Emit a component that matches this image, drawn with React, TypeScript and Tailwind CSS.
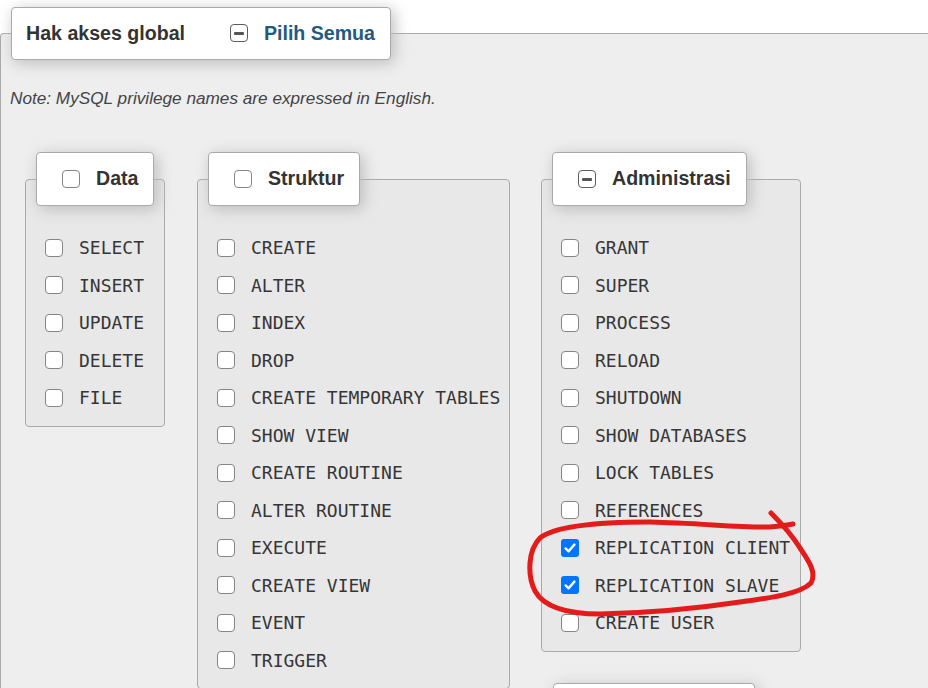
import React from "react";

type BoxState = "off" | "on" | "mixed";

function Box({ state = "off" }: { state?: BoxState }) {
  if (state === "on") {
    return (
      <span className="flex h-[18px] w-[18px] shrink-0 items-center justify-center rounded-[3px] bg-[#0075ff]">
        <svg width="14" height="14" viewBox="0 0 14 14" fill="none">
          <path d="M2.6 7.4 L5.6 10.3 L11.4 3.6" stroke="#fff" strokeWidth="2.4" strokeLinecap="round" strokeLinejoin="round" />
        </svg>
      </span>
    );
  }
  if (state === "mixed") {
    return (
      <span className="flex h-[18px] w-[18px] shrink-0 items-center justify-center rounded-[4px] border-[1.5px] border-[#5c5c5c] bg-white">
        <span className="h-[3px] w-[10px] rounded-[1px] bg-[#555]" />
      </span>
    );
  }
  return <span className="block h-[18px] w-[18px] shrink-0 rounded-[4px] border-[1.5px] border-[#858585] bg-white" />;
}

const sans = "font-['Liberation_Sans',Arial,sans-serif]";

function Legend({ title, state = "off" }: { title: string; state?: BoxState }) {
  return (
    <div
      className={`relative z-10 ml-[11px] flex h-[54px] w-fit items-center gap-[16px] rounded-[4px] border border-[#aaa] bg-white pl-[25px] pr-[15px] shadow-[3px_3px_15px_#bbb] ${sans} text-[19.6px] font-bold text-[#333]`}
    >
      <Box state={state} />
      <span>{title}</span>
    </div>
  );
}

function Group({
  title,
  state = "off",
  items,
  checked = [],
  width,
}: {
  title: string;
  state?: BoxState;
  items: string[];
  checked?: string[];
  width: string;
}) {
  return (
    <div className={`flex flex-col ${width}`}>
      <Legend title={title} state={state} />
      <div className="-mt-[27px] rounded-[4px] border border-[#aaa] bg-[#e8e8e8] pb-[9px] pl-[19px] pr-[10px] pt-[49px]">
        {items.map((it) => (
          <div key={it} className="flex h-[37.5px] items-center gap-[16px]">
            <Box state={checked.includes(it) ? "on" : "off"} />
            <span className="whitespace-nowrap font-['DejaVu_Sans_Mono',monospace] text-[18px] text-[#363636]">{it}</span>
          </div>
        ))}
      </div>
    </div>
  );
}

export default function App() {
  return (
    <div className="relative h-[688px] w-[928px] overflow-hidden bg-white pt-[7px]">
      <div
        className={`relative z-10 ml-[11px] flex h-[53px] w-[380px] items-center rounded-[4px] border border-[#aaa] bg-white pl-[14px] pr-[15px] shadow-[3px_3px_15px_#bbb] ${sans} text-[19.6px] font-bold`}
      >
        <span className="text-[#333]">Hak akses global</span>
        <span className="ml-auto flex items-center gap-[16px] text-[#235a81]">
          <Box state="mixed" />
          Pilih Semua
        </span>
      </div>
      <div className="-mt-[27px] h-[700px] rounded-tl-[4px] border-l border-t border-[#aaa] bg-[#eee] pl-[9px] pt-[54px]">
        <p className={`${sans} text-[17.2px] italic leading-[20px] text-[#444]`}>
          Note: MySQL privilege names are expressed in English.
        </p>
        <div className="ml-[15px] mt-[44px] flex items-start">
          <Group title="Data" width="w-[140px]" items={["SELECT", "INSERT", "UPDATE", "DELETE", "FILE"]} />
          <div className="ml-[32px]">
            <Group
              title="Struktur"
              width="w-[313px]"
              items={[
                "CREATE",
                "ALTER",
                "INDEX",
                "DROP",
                "CREATE TEMPORARY TABLES",
                "SHOW VIEW",
                "CREATE ROUTINE",
                "ALTER ROUTINE",
                "EXECUTE",
                "CREATE VIEW",
                "EVENT",
                "TRIGGER",
              ]}
            />
          </div>
          <div className="ml-[31px] flex flex-col gap-[31px]">
            <Group
              title="Administrasi"
              state="mixed"
              width="w-[260px]"
              items={[
                "GRANT",
                "SUPER",
                "PROCESS",
                "RELOAD",
                "SHUTDOWN",
                "SHOW DATABASES",
                "LOCK TABLES",
                "REFERENCES",
                "REPLICATION CLIENT",
                "REPLICATION SLAVE",
                "CREATE USER",
              ]}
              checked={["REPLICATION CLIENT", "REPLICATION SLAVE"]}
            />
            {/* next group, only its top edge is in view */}
            <div className="ml-[12px] h-[54px] w-[202px] rounded-[4px] border border-[#aaa] bg-white shadow-[3px_3px_15px_#bbb]" />
          </div>
        </div>
      </div>

      {/* hand-drawn annotation */}
      <svg className="pointer-events-none absolute left-0 top-0" width="928" height="688" viewBox="0 0 928 688" fill="none">
        <path
          d="M771 513 C780 522 792 535 800 548 C808 560 817 572 811 583 C800 594 770 598 740 602 C700 608 650 613 600 614 C570 614 545 609 535 591 C527 575 528 550 540 538 C555 526 600 522 650 522 C700 523 740 528 770 527 C780 526 788 525 793 524"
          stroke="#e41b1b"
          strokeWidth="5"
          strokeLinecap="round"
          strokeLinejoin="round"
        />
      </svg>
    </div>
  );
}
